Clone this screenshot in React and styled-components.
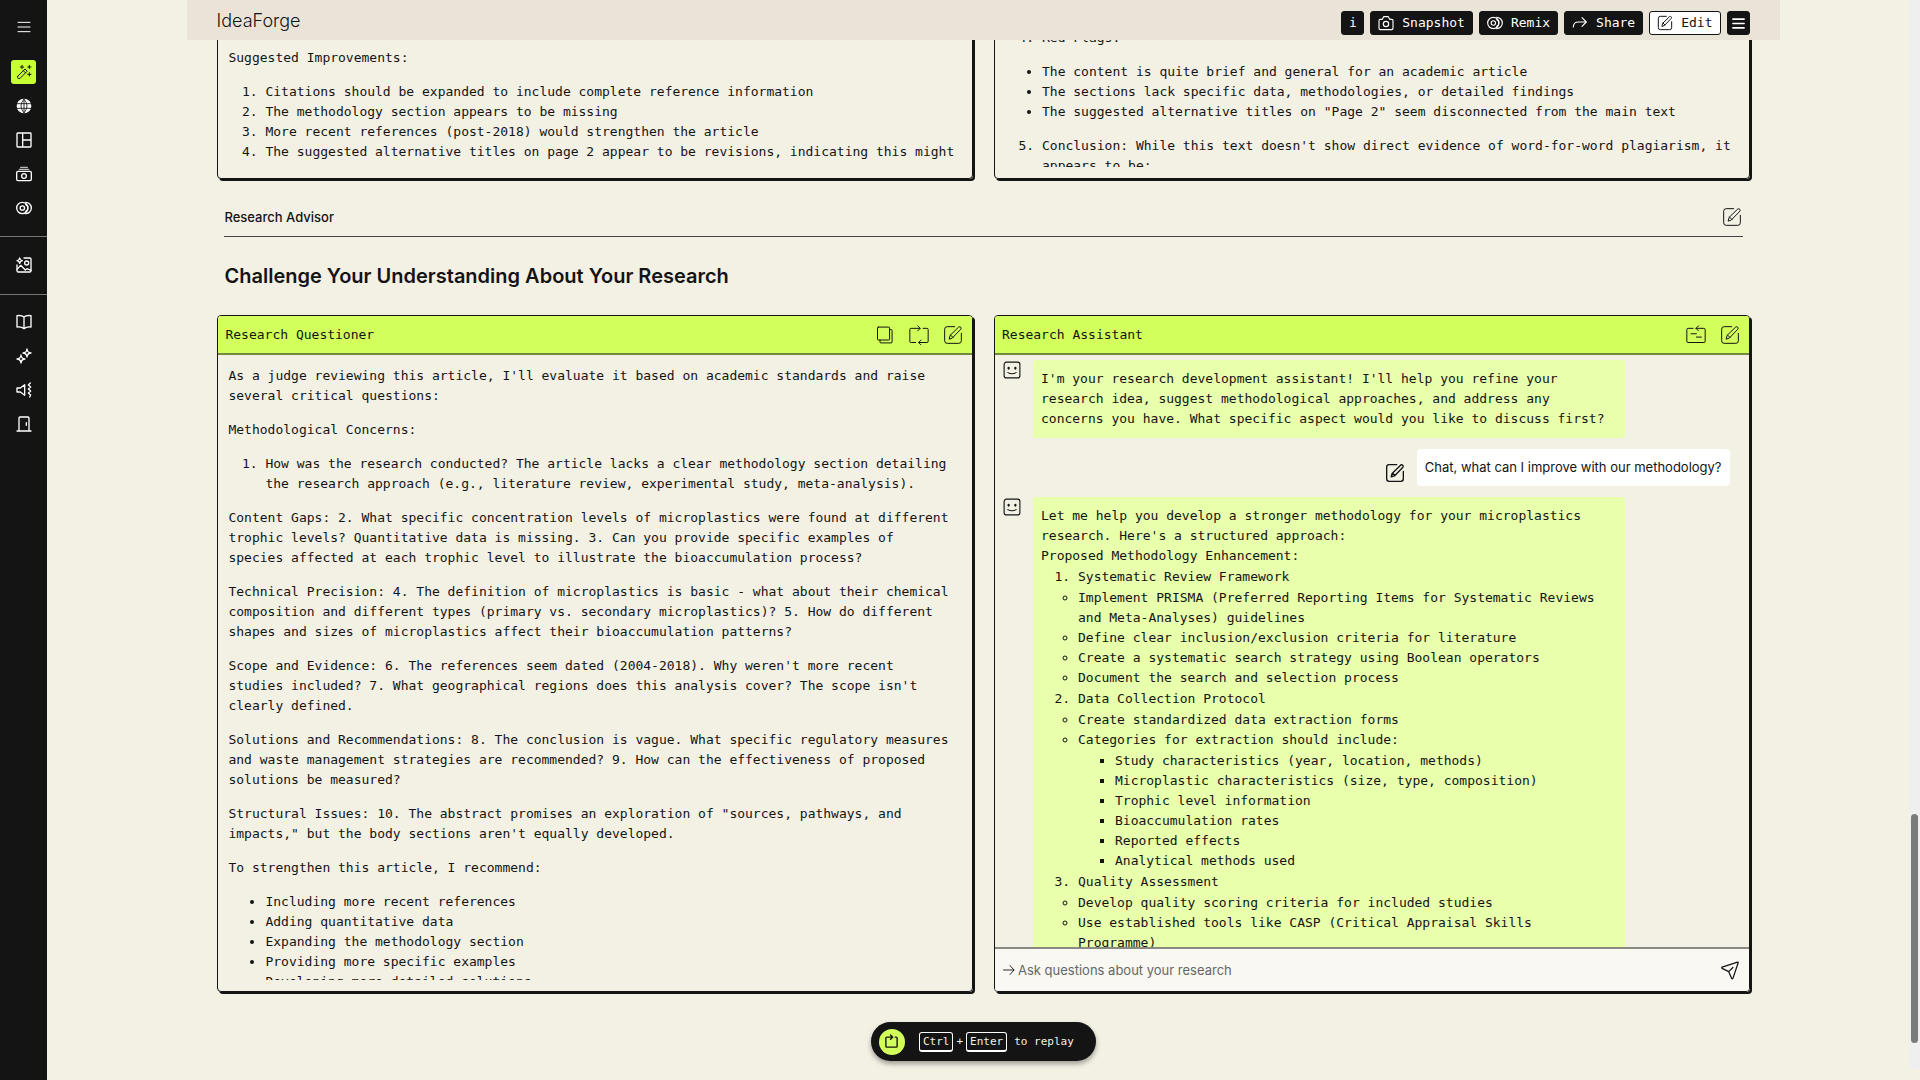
import React from 'react';
import styled, { createGlobalStyle } from 'styled-components';

const sans = "Inter, 'Open Sans', sans-serif";
const mono = "'DejaVu Sans Mono', 'Liberation Mono', monospace";
const ink = '#141414';
const paper = '#f3f0e4';
const lime = '#d2ff5c';

const GlobalStyle = createGlobalStyle`
  * {
    box-sizing: border-box;
  }

  body {
    margin: 0;
    background: ${paper};
    color: ${ink};
    font-family: ${mono};
    font-size: 13px;
    line-height: 20px;
  }

  p, ol, ul, h1, h2, h3 {
    margin: 0;
  }

  button, input {
    font: inherit;
    color: inherit;
  }
`;

const Page = styled.div`
  display: flex;
  min-height: 100vh;
`;

/* Sidebar */

const Sidebar = styled.nav`
  flex: 0 0 47px;
  background: ${ink};
  color: #fff;
`;

const SideGroup = styled.div`
  display: flex;
  flex-direction: column;
  align-items: center;
  gap: 10px;
  padding: ${(props) => props.$pad};
  border-bottom: ${(props) => (props.$last ? 'none' : '1px solid #777')};
`;

const SideButton = styled.button`
  display: flex;
  align-items: center;
  justify-content: center;
  width: 25px;
  height: 24px;
  padding: 0;
  border: none;
  border-radius: 3px;
  background: ${(props) => (props.$active ? '#c6ff33' : 'transparent')};
  color: ${(props) => (props.$active ? ink : '#fff')};
  margin-bottom: ${(props) => (props.$spaced ? '11px' : '0')};
`;

/* Top bar */

const Content = styled.div`
  flex: 1;
  min-width: 0;
`;

const TopBar = styled.header`
  position: sticky;
  top: 0;
  z-index: 2;
  display: flex;
  align-items: center;
  justify-content: space-between;
  width: 85%;
  height: 40px;
  margin: 0 auto;
  padding: 0 30px 0 29px;
  background: #eae3d8;
`;

const Brand = styled.h1`
  padding-top: 2px;
  font-family: ${sans};
  font-size: 18px;
  font-weight: 300;
`;

const Actions = styled.div`
  display: flex;
  gap: 6px;
  padding-top: 6px;
`;

const ActionButton = styled.button`
  display: flex;
  align-items: center;
  justify-content: center;
  gap: 8px;
  height: 24px;
  min-width: 23px;
  padding: ${(props) => (props.$square ? '0' : '0 7px')};
  border: 1px solid ${ink};
  border-radius: 3px;
  background: ${(props) => (props.$light ? '#fff' : ink)};
  color: ${(props) => (props.$light ? ink : '#fff')};
`;

/* Panels */

const Main = styled.main`
  width: 85%;
  margin: -20px auto 0;
  padding: 0 30px;
`;

const Columns = styled.div`
  display: grid;
  grid-template-columns: 1fr 1fr;
  gap: 21px;
`;

const Panel = styled.section`
  display: flex;
  flex-direction: column;
  min-width: 0;
  height: ${(props) => props.$height};
  border: 1px solid ${ink};
  border-radius: 4px;
  box-shadow: 2px 2px 0 ${ink};
  overflow: hidden;
`;

const PanelHeader = styled.header`
  display: flex;
  align-items: center;
  justify-content: space-between;
  flex: 0 0 39px;
  padding: 0 9px 0 7px;
  background: ${lime};
  border-bottom: 2px solid #75893c;
`;

const PanelTitle = styled.h3`
  font-size: 13px;
  font-weight: 400;
`;

const IconRow = styled.div`
  display: flex;
  align-items: center;
  gap: 14px;
`;

const IconButton = styled.button`
  display: flex;
  padding: 0;
  border: none;
  background: none;
`;

const PanelText = styled.div`
  flex: 1;
  min-height: 0;
  margin-bottom: 11px;
  padding: ${(props) => props.$top} 17px 0 10px;
  overflow: hidden;

  > * + * {
    margin-top: 14px;
  }
`;

const NumberList = styled.ol`
  padding-left: 37px;
`;

const BulletList = styled.ul`
  padding-left: 37px;
  list-style-type: ${(props) => props.$marker || 'disc'};
`;

/* Section title */

const SectionBar = styled.div`
  display: flex;
  align-items: center;
  justify-content: space-between;
  margin: 18px 7px 0;
  padding: 10px 1px 9px 0;
  border-bottom: 1px solid #444;
  font-family: ${sans};
  font-weight: 500;
`;

const SectionTitle = styled.h2`
  margin: 26px 7px;
  font-family: ${sans};
  font-size: 20px;
  font-weight: 600;
  line-height: 26px;
`;

/* Chat */

const Chat = styled.div`
  display: flex;
  flex-direction: column;
  flex: 1;
  min-height: 0;
  gap: 11px;
  padding: 5px 19px 0 8px;
  overflow: hidden;
`;

const Message = styled.div`
  display: flex;
  flex-shrink: 0;
  align-items: ${(props) => (props.$mine ? 'flex-end' : 'flex-start')};
  justify-content: ${(props) => (props.$mine ? 'flex-end' : 'flex-start')};
  gap: 12px;

  > svg {
    margin-top: 1px;
  }
`;

const MessageEdit = styled(IconButton)`
  padding-bottom: 3px;
`;

const Bubble = styled.div`
  width: 592px;
  max-width: 82%;
  padding: 9px 8px;
  border-radius: 3px;
  background: #e8ffab;

  > ol, > ul, ul ul {
    margin-top: 1px;
  }
`;

const MyBubble = styled.div`
  padding: 9px 8px;
  border-radius: 4px;
  background: #fff;
  font-family: ${sans};
  line-height: 19px;
`;

const AskForm = styled.form`
  display: flex;
  align-items: center;
  flex: 0 0 44px;
  padding: 0 9px 0 8px;
  border-top: 2px solid #8a8982;
  background: #f9f8f2;
`;

const AskInput = styled.input`
  flex: 1;
  min-width: 0;
  padding: 0 3px;
  border: none;
  outline: none;
  background: none;
  font-family: ${sans};

  &::placeholder {
    color: #666;
    opacity: 1;
  }
`;

/* Replay */

const ReplayButton = styled.button`
  display: flex;
  align-items: center;
  width: 225px;
  height: 39px;
  margin: 30px auto 19px;
  padding: 0 8px;
  border: none;
  border-radius: 20px;
  background: ${ink};
  color: #f3f0e4;
  box-shadow: 0 3px 5px rgba(0, 0, 0, 0.35);
  font-size: 11px;
`;

const ReplayIcon = styled.span`
  display: flex;
  align-items: center;
  justify-content: center;
  width: 26px;
  height: 26px;
  margin-right: 14px;
  border-radius: 50%;
  background: ${lime};
  color: ${ink};
`;

const Key = styled.kbd`
  padding: 0 3px;
  border: 1px solid #fff;
  border-bottom-width: 2px;
  border-radius: 3px;
  font: inherit;
  line-height: 17px;
`;

const KeyHint = styled.span`
  padding: 0 ${(props) => props.$gap};
`;

/* Page scroll indicator */

const ScrollTrack = styled.div`
  position: fixed;
  top: 0;
  right: 0;
  bottom: 11px;
  display: flex;
  flex-direction: column;
  justify-content: flex-end;
  width: 11px;
  padding: 0 2px 26px;
  background: #efefef;
`;

const ScrollThumb = styled.div`
  height: 22%;
  border-radius: 4px;
  background: #7b7b7b;
`;

const icons = {
  menu: <path d="M3 5h18M3 12h18M3 19h18" />,
  wand: (
    <>
      <path d="M2.500 18.500 13.500 7.500l3.300 3.300L5.800 21.800q-1.700.6-2.800-.5-1.100-1.100-.5-2.800zM11 10l3.300 3.300" />
      <path d="M9 2v5M6.500 4.500h5M20 2v5M17.500 4.500h5M20 13v5M17.500 15.500h5" />
    </>
  ),
  globe: (
    <>
      <circle cx="12" cy="12" r="10" fill="currentColor" />
      <path d="M2 8.500h20M2 15.500h20M12 2v20M12 2c-6 6-6 14 0 20M12 2c6 6 6 14 0 20" stroke="#141414" strokeWidth="1.300" />
    </>
  ),
  layout: <path d="M2.500 1.500h19a1 1 0 0 1 1 1v19a1 1 0 0 1-1 1h-19a1 1 0 0 1-1-1v-19a1 1 0 0 1 1-1zM10 1.500v21M10 12h12.500" />,
  gallery: (
    <>
      <path d="M7 2h10M5 5h14" opacity="0.7" />
      <path d="M3 8h18a2 2 0 0 1 2 2v10a2 2 0 0 1-2 2H3a2 2 0 0 1-2-2V10a2 2 0 0 1 2-2z" />
      <circle cx="12" cy="15" r="3.500" />
    </>
  ),
  camera: (
    <>
      <path d="M1.500 8.500a2 2 0 0 1 2-2h3L8.500 2.500h7l2 4h3a2 2 0 0 1 2 2V20a2 2 0 0 1-2 2h-17a2 2 0 0 1-2-2z" />
      <circle cx="12" cy="13.500" r="4" />
    </>
  ),
  remix: (
    <>
      <circle cx="9.500" cy="12" r="8.500" />
      <circle cx="9.500" cy="12" r="3.300" />
      <path d="M14.500 3.500a8.500 8.500 0 0 1 0 17M14.500 7a5.500 5.500 0 0 1 0 10" />
    </>
  ),
  share: <path d="M2 18c0-5 3-7.500 8-7.500h11M15 4l6.500 6.500L15 17" />,
  edit: (
    <>
      <path d="M14 2H5a3 3 0 0 0-3 3v14a3 3 0 0 0 3 3h14a3 3 0 0 0 3-3v-9" />
      <path d="M7.500 16.500l1-4L19 2.300q1.200-.6 2.300.4.900 1.100.2 2.300L11.300 15.500zM9 12l3 3" />
    </>
  ),
  image: (
    <>
      <path d="M12 1.500h8.500a2 2 0 0 1 2 2v17a2 2 0 0 1-2 2h-17a2 2 0 0 1-2-2V12" />
      <circle cx="16" cy="9" r="3" />
      <path d="M1.500 18.500l5.500-6 7 7 2.500-2 6 2.500M5.500 1.500Q6 5 9.500 5.500 6 6 5.500 9.500 5 6 1.500 5.500 5 5 5.500 1.500z" />
    </>
  ),
  book: <path d="M12 4.500C10 2.700 5 2 1.500 2.500v17c3.500-.5 8 .2 10.500 2.500 2.500-2.300 7-3 10.500-2.500v-17C19 2 14 2.700 12 4.500zM12 4.500V22" />,
  sparkles: <path d="M16.500 1.500Q17 7 22.500 7.500 17 8 16.500 13.500 16 8 10.500 7.500 16 7 16.500 1.500zM7.500 10.500Q8 16 13.500 16.500 8 17 7.500 22.500 7 17 1.500 16.500 7 16 7.500 10.500z" />,
  speaker: (
    <>
      <path d="M1.500 9h5L13 4v16l-6.500-5h-5z" />
      <path d="M21.500 1.500L18.500 4.500l3.500 3-3.500 3 3.500 3-3.500 3 3.500 3-1.500 3" />
    </>
  ),
  door: <path d="M1.500 22.500h21M4.500 22.500V3A1.500 1.500 0 0 1 6 1.500h12A1.500 1.500 0 0 1 19.500 3v19.500M15.500 10v4" />,
  copy: (
    <>
      <path d="M4 2.500h12.500a1 1 0 0 1 1 1V17a1 1 0 0 1-1 1H4a1 1 0 0 1-1-1V3.500a1 1 0 0 1 1-1z" />
      <path d="M17.500 5.500h2a1 1 0 0 1 1 1v14a1 1 0 0 1-1 1H7a1 1 0 0 1-1-1V18" />
    </>
  ),
  loop: <path d="M8 21H2.500A1.500 1.500 0 0 1 1 19.500v-14A1.500 1.500 0 0 1 2.500 4H13M10.500 1l3 3-3 3M17 4h4.500A1.500 1.500 0 0 1 23 5.500v14a1.500 1.500 0 0 1-1.500 1.500H12M14.500 18l-3 3 3 3" />,
  reset: <path d="M8.500 4h-6A1.500 1.500 0 0 0 1 5.500v14A1.500 1.500 0 0 0 2.500 21h19a1.500 1.500 0 0 0 1.500-1.500v-14A1.500 1.500 0 0 0 21.500 4H12M15 1l-3 3 3 3M6 10.500h6.500M12.500 14.500h6" />,
  bot: (
    <>
      <path d="M4.500 1.500h15a3 3 0 0 1 3 3v15a3 3 0 0 1-3 3h-15a3 3 0 0 1-3-3v-15a3 3 0 0 1 3-3zM6.500 15.500q5.500 3 11 0" />
      <path d="M7.500 9v1M16.500 9v1" strokeWidth="3" />
    </>
  ),
  arrow: <path d="M1 12h21M14 3l8 9-8 9" />,
  send: <path d="M2.500 8.500L21 2.500a.7.7 0 0 1 .8.8L15.500 22q-.8 1-1.600 0l-3.400-8L2.500 10q-.8-.8 0-1.500zM10.500 14l5-5" />,
  replay: <path d="M8 5H4.500A1.500 1.500 0 0 0 3 6.500v13A1.500 1.500 0 0 0 4.500 21h15a1.500 1.500 0 0 0 1.500-1.500v-13A1.500 1.500 0 0 0 19.500 5H18M8 5h5M10.500 1.500L14 5l-3.500 3.500" />,
};

function Icon({ name, size = 16, weight = 2 }) {
  return (
    <svg
      width={size}
      height={size}
      viewBox="0 0 24 24"
      fill="none"
      stroke="currentColor"
      strokeWidth={weight}
      strokeLinecap="round"
      strokeLinejoin="round"
      aria-hidden="true"
    >
      {icons[name]}
    </svg>
  );
}

const sideGroups = [
  {
    pad: '15px 0 16px',
    items: [
      { icon: 'menu', label: 'Menu', spaced: true, weight: 1.5 },
      { icon: 'wand', label: 'Create', active: true, weight: 1.5 },
      { icon: 'globe', label: 'Explore' },
      { icon: 'layout', label: 'Templates' },
      { icon: 'gallery', label: 'Snapshots' },
      { icon: 'remix', label: 'Remixes' },
    ],
  },
  { pad: '16px 0 17px', items: [{ icon: 'image', label: 'Images' }] },
  {
    pad: '15px 0',
    last: true,
    items: [
      { icon: 'book', label: 'Guides' },
      { icon: 'sparkles', label: 'What is new' },
      { icon: 'speaker', label: 'Announcements' },
      { icon: 'door', label: 'Log out' },
    ],
  },
];

function SideNav() {
  return (
    <Sidebar>
      {sideGroups.map((group, index) => (
        <SideGroup key={index} $pad={group.pad} $last={group.last}>
          {group.items.map((item) => (
            <SideButton key={item.icon} aria-label={item.label} $active={item.active} $spaced={item.spaced}>
              <Icon name={item.icon} weight={item.weight} />
            </SideButton>
          ))}
        </SideGroup>
      ))}
    </Sidebar>
  );
}

function Questioner() {
  return (
    <Panel $height="677px">
      <PanelHeader>
        <PanelTitle>Research Questioner</PanelTitle>
        <IconRow>
          <IconButton aria-label="Copy"><Icon name="copy" size={20} weight={1.2} /></IconButton>
          <IconButton aria-label="Regenerate"><Icon name="loop" size={20} weight={1.2} /></IconButton>
          <IconButton aria-label="Edit questioner"><Icon name="edit" size={20} weight={1.2} /></IconButton>
        </IconRow>
      </PanelHeader>
      <PanelText $top="11px">
        <p>As a judge reviewing this article, I'll evaluate it based on academic standards and raise several critical questions:</p>
        <p>Methodological Concerns:</p>
        <NumberList>
          <li>How was the research conducted? The article lacks a clear methodology section detailing the research approach (e.g., literature review, experimental study, meta-analysis).</li>
        </NumberList>
        <p>Content Gaps: 2. What specific concentration levels of microplastics were found at different trophic levels? Quantitative data is missing. 3. Can you provide specific examples of species affected at each trophic level to illustrate the bioaccumulation process?</p>
        <p>Technical Precision: 4. The definition of microplastics is basic - what about their chemical composition and different types (primary vs. secondary microplastics)? 5. How do different shapes and sizes of microplastics affect their bioaccumulation patterns?</p>
        <p>Scope and Evidence: 6. The references seem dated (2004-2018). Why weren't more recent studies included? 7. What geographical regions does this analysis cover? The scope isn't clearly defined.</p>
        <p>Solutions and Recommendations: 8. The conclusion is vague. What specific regulatory measures and waste management strategies are recommended? 9. How can the effectiveness of proposed solutions be measured?</p>
        <p>Structural Issues: 10. The abstract promises an exploration of "sources, pathways, and impacts," but the body sections aren't equally developed.</p>
        <p>To strengthen this article, I recommend:</p>
        <BulletList>
          <li>Including more recent references</li>
          <li>Adding quantitative data</li>
          <li>Expanding the methodology section</li>
          <li>Providing more specific examples</li>
          <li>Developing more detailed solutions</li>
        </BulletList>
      </PanelText>
    </Panel>
  );
}

function Assistant() {
  return (
    <Panel $height="677px">
      <PanelHeader>
        <PanelTitle>Research Assistant</PanelTitle>
        <IconRow>
          <IconButton aria-label="Reset chat"><Icon name="reset" size={20} weight={1.2} /></IconButton>
          <IconButton aria-label="Edit assistant"><Icon name="edit" size={20} weight={1.2} /></IconButton>
        </IconRow>
      </PanelHeader>
      <Chat>
        <Message>
          <Icon name="bot" size={18} weight={1.5} />
          <Bubble>
            I'm your research development assistant! I'll help you refine your research idea, suggest methodological approaches, and address any concerns you have. What specific aspect would you like to discuss first?
          </Bubble>
        </Message>
        <Message $mine>
          <MessageEdit aria-label="Edit message"><Icon name="edit" size={20} weight={1.6} /></MessageEdit>
          <MyBubble>Chat, what can I improve with our methodology?</MyBubble>
        </Message>
        <Message>
          <Icon name="bot" size={18} weight={1.5} />
          <Bubble>
            <p>Let me help you develop a stronger methodology for your microplastics research. Here's a structured approach:</p>
            <p>Proposed Methodology Enhancement:</p>
            <NumberList>
              <li>Systematic Review Framework</li>
            </NumberList>
            <BulletList $marker="circle">
              <li>Implement PRISMA (Preferred Reporting Items for Systematic Reviews and Meta-Analyses) guidelines</li>
              <li>Define clear inclusion/exclusion criteria for literature</li>
              <li>Create a systematic search strategy using Boolean operators</li>
              <li>Document the search and selection process</li>
            </BulletList>
            <NumberList start={2}>
              <li>Data Collection Protocol</li>
            </NumberList>
            <BulletList $marker="circle">
              <li>Create standardized data extraction forms</li>
              <li>
                Categories for extraction should include:
                <BulletList $marker="square">
                  <li>Study characteristics (year, location, methods)</li>
                  <li>Microplastic characteristics (size, type, composition)</li>
                  <li>Trophic level information</li>
                  <li>Bioaccumulation rates</li>
                  <li>Reported effects</li>
                  <li>Analytical methods used</li>
                </BulletList>
              </li>
            </BulletList>
            <NumberList start={3}>
              <li>Quality Assessment</li>
            </NumberList>
            <BulletList $marker="circle">
              <li>Develop quality scoring criteria for included studies</li>
              <li>Use established tools like CASP (Critical Appraisal Skills Programme)</li>
            </BulletList>
          </Bubble>
        </Message>
      </Chat>
      <AskForm onSubmit={(event) => event.preventDefault()}>
        <Icon name="arrow" size={12} weight={1.8} />
        <AskInput aria-label="Ask questions about your research" placeholder="Ask questions about your research" />
        <IconButton aria-label="Send"><Icon name="send" size={20} weight={1.5} /></IconButton>
      </AskForm>
    </Panel>
  );
}

function App() {
  return (
    <>
      <GlobalStyle />
      <Page>
        <SideNav />
        <Content>
          <TopBar>
            <Brand>IdeaForge</Brand>
            <Actions>
              <ActionButton $square>i</ActionButton>
              <ActionButton><Icon name="camera" weight={1.7} />Snapshot</ActionButton>
              <ActionButton><Icon name="remix" weight={1.7} />Remix</ActionButton>
              <ActionButton><Icon name="share" weight={1.7} />Share</ActionButton>
              <ActionButton $light><Icon name="edit" weight={1.5} />Edit</ActionButton>
              <ActionButton $square aria-label="More"><Icon name="menu" size={15} weight={2.5} /></ActionButton>
            </Actions>
          </TopBar>

          <Main>
            <Columns>
              <Panel $height="159px">
                <PanelText $top="27px">
                  <p>Suggested Improvements:</p>
                  <NumberList>
                    <li>Citations should be expanded to include complete reference information</li>
                    <li>The methodology section appears to be missing</li>
                    <li>More recent references (post-2018) would strengthen the article</li>
                    <li>The suggested alternative titles on page 2 appear to be revisions, indicating this might</li>
                  </NumberList>
                </PanelText>
              </Panel>
              <Panel $height="159px">
                <PanelText $top="7px">
                  <NumberList start={4}>
                    <li>Red Flags:</li>
                  </NumberList>
                  <BulletList>
                    <li>The content is quite brief and general for an academic article</li>
                    <li>The sections lack specific data, methodologies, or detailed findings</li>
                    <li>The suggested alternative titles on "Page 2" seem disconnected from the main text</li>
                  </BulletList>
                  <NumberList start={5}>
                    <li>Conclusion: While this text doesn't show direct evidence of word-for-word plagiarism, it appears to be:</li>
                  </NumberList>
                </PanelText>
              </Panel>
            </Columns>

            <SectionBar>
              <span>Research Advisor</span>
              <IconButton aria-label="Edit section"><Icon name="edit" size={20} weight={1.2} /></IconButton>
            </SectionBar>
            <SectionTitle>Challenge Your Understanding About Your Research</SectionTitle>

            <Columns>
              <Questioner />
              <Assistant />
            </Columns>

            <ReplayButton>
              <ReplayIcon><Icon name="replay" size={15} weight={2.2} /></ReplayIcon>
              <Key>Ctrl</Key>
              <KeyHint $gap="3px">+</KeyHint>
              <Key>Enter</Key>
              <KeyHint $gap="7px">to replay</KeyHint>
            </ReplayButton>
          </Main>
        </Content>
      </Page>
      <ScrollTrack>
        <ScrollThumb />
      </ScrollTrack>
    </>
  );
}

export default App;
